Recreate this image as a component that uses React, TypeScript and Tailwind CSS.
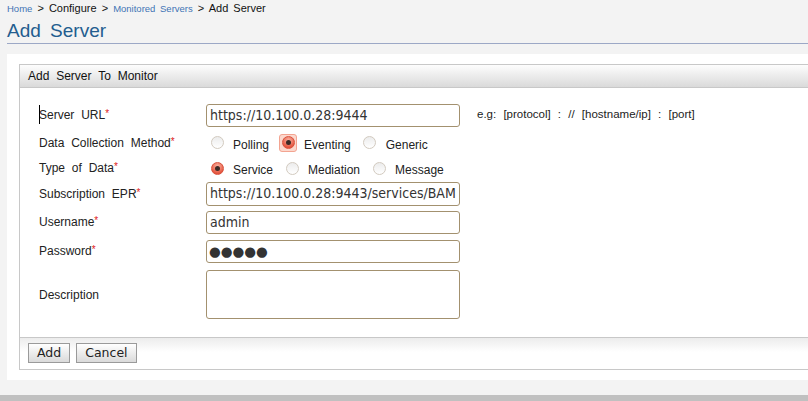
import type { ReactNode } from 'react';

const sans = "font-['Liberation_Sans',Arial,sans-serif]";
const fieldFont = "font-['DejaVu_Sans_Condensed','DejaVu_Sans',sans-serif] [font-stretch:condensed]";

function Req() {
  return <span className="relative top-[-2px] text-[#e02020] text-[10px] leading-none">*</span>;
}

function Radio({ checked, focused }: { checked?: boolean; focused?: boolean }) {
  return (
    <span
      className={`w-[18px] h-[18px] shrink-0 flex items-center justify-center rounded-[3px] ${
        focused ? 'border border-[#f3a491] bg-[#fcd8cd]' : ''
      }`}
    >
      {checked ? (
        <span className="w-[13px] h-[13px] rounded-full border border-[#d8533e] bg-[radial-gradient(circle_at_50%_30%,#fbb4a4,#e4533c_75%)] flex items-center justify-center">
          <span className="w-[5px] h-[5px] rounded-full bg-[#3b2a25]" />
        </span>
      ) : (
        <span className="w-[13px] h-[13px] rounded-full border border-[#d2cabf] bg-gradient-to-b from-[#ececec] to-white" />
      )}
    </span>
  );
}

function Option({ label, checked, focused }: { label: string; checked?: boolean; focused?: boolean }) {
  return (
    <div className="flex items-center">
      <Radio checked={checked} focused={focused} />
      <span className="ml-[7px] mt-[4px] text-[12px] text-[#222]">{label}</span>
    </div>
  );
}

function Row({ label, required, h, children }: { label: string; required?: boolean; h: string; children: ReactNode }) {
  return (
    <div className={`relative flex items-center ${h}`}>
      <div className="w-[167px] shrink-0 text-[12px] text-[#222] [word-spacing:3.5px]">
        {label}
        {required && <Req />}
      </div>
      {children}
    </div>
  );
}

function Field({ value, h = 'h-[23px]' }: { value?: string; h?: string }) {
  return (
    <div
      className={`${h} w-[254px] shrink-0 border border-[#a3916f] rounded-[3px] bg-white px-[3px] flex items-center overflow-hidden whitespace-nowrap text-[14px] text-[#333] ${fieldFont}`}
    >
      {value}
    </div>
  );
}

export default function App() {
  return (
    <div className={`w-full min-h-[401px] overflow-hidden bg-[#f3f3f3] ${sans}`}>
      <div className="h-[19px] pl-[7px] leading-[16px] [word-spacing:2px] text-[11px] text-[#111] whitespace-nowrap">
        <span className="text-[9.5px] text-[#3f74b5]">Home</span> &gt; Configure &gt;{' '}
        <span className="text-[9.5px] text-[#3f74b5]">Monitored Servers</span> &gt; Add Server
      </div>
      <div className="ml-[7px] h-[25px] border-b border-[#9ca8c6] text-[19px] leading-[24px] text-[#235d8f] [word-spacing:4px]">
        Add Server
      </div>

      <div className="ml-[7px] mt-[10px] pt-[10px] pb-[10px] bg-white">
        <div className="ml-[12px] w-[820px] border border-[#c8c8c8]">
          <div className="h-[23px] border-b border-[#c8c8c8] bg-gradient-to-b from-[#fdfdfd] to-[#dadada] pl-[8px] flex items-center text-[12px] text-[#111] [word-spacing:3.5px]">
            Add Server To Monitor
          </div>

          <div className="pl-[19px] pt-[13px] pb-[13px]">
            <Row label="Server URL" required h="h-[28px]">
              <span className="absolute left-0 top-[4px] h-[19px] w-px bg-black" />
              <Field value="https://10.100.0.28:9444" />
              <span className="ml-[17px] text-[11.5px] text-[#222] [word-spacing:4px]">
                e.g: [protocol] : // [hostname/ip] : [port]
              </span>
            </Row>
            <Row label="Data Collection Method" required h="h-[27px]">
              <div className="flex items-center gap-[10px] pl-[2px]">
                <Option label="Polling" />
                <Option label="Eventing" checked focused />
                <Option label="Generic" />
              </div>
            </Row>
            <Row label="Type of Data" required h="h-[24px]">
              <div className="flex items-center gap-[10px] pl-[2px]">
                <Option label="Service" checked />
                <Option label="Mediation" />
                <Option label="Message" />
              </div>
            </Row>
            <Row label="Subscription EPR" required h="h-[27px]">
              <Field value="https://10.100.0.28:9443/services/BAM" h="h-[24px]" />
            </Row>
            <Row label="Username" required h="h-[30px]">
              <Field value="admin" />
            </Row>
            <Row label="Password" required h="h-[28px]">
              <div className="h-[23px] w-[254px] border border-[#a3916f] rounded-[3px] bg-white px-[2px] flex items-center text-[13.5px] text-[#333] font-['DejaVu_Sans',sans-serif]">
                ●●●●●
              </div>
            </Row>
            <Row label="Description" h="h-[59px]">
              <Field h="h-[49px]" />
            </Row>
          </div>

          <div className="h-[32px] border-t border-[#c8c8c8] bg-gradient-to-b from-[#ececec] to-white to-[45%] pl-[8px] pt-[5px] flex items-start gap-[6px]">
            <button className="h-[20px] px-[8px] border border-[#9a9a9a] bg-gradient-to-b from-white to-[#dadada] text-[12.5px] leading-none text-[#222] font-['DejaVu_Sans',sans-serif]">
              Add
            </button>
            <button className="h-[20px] px-[8px] border border-[#9a9a9a] bg-gradient-to-b from-white to-[#dadada] text-[12.5px] leading-none text-[#222] font-['DejaVu_Sans',sans-serif]">
              Cancel
            </button>
          </div>
        </div>
      </div>

      <div className="mt-[15px] h-[6px] bg-[#c0c0c0]" />
    </div>
  );
}
